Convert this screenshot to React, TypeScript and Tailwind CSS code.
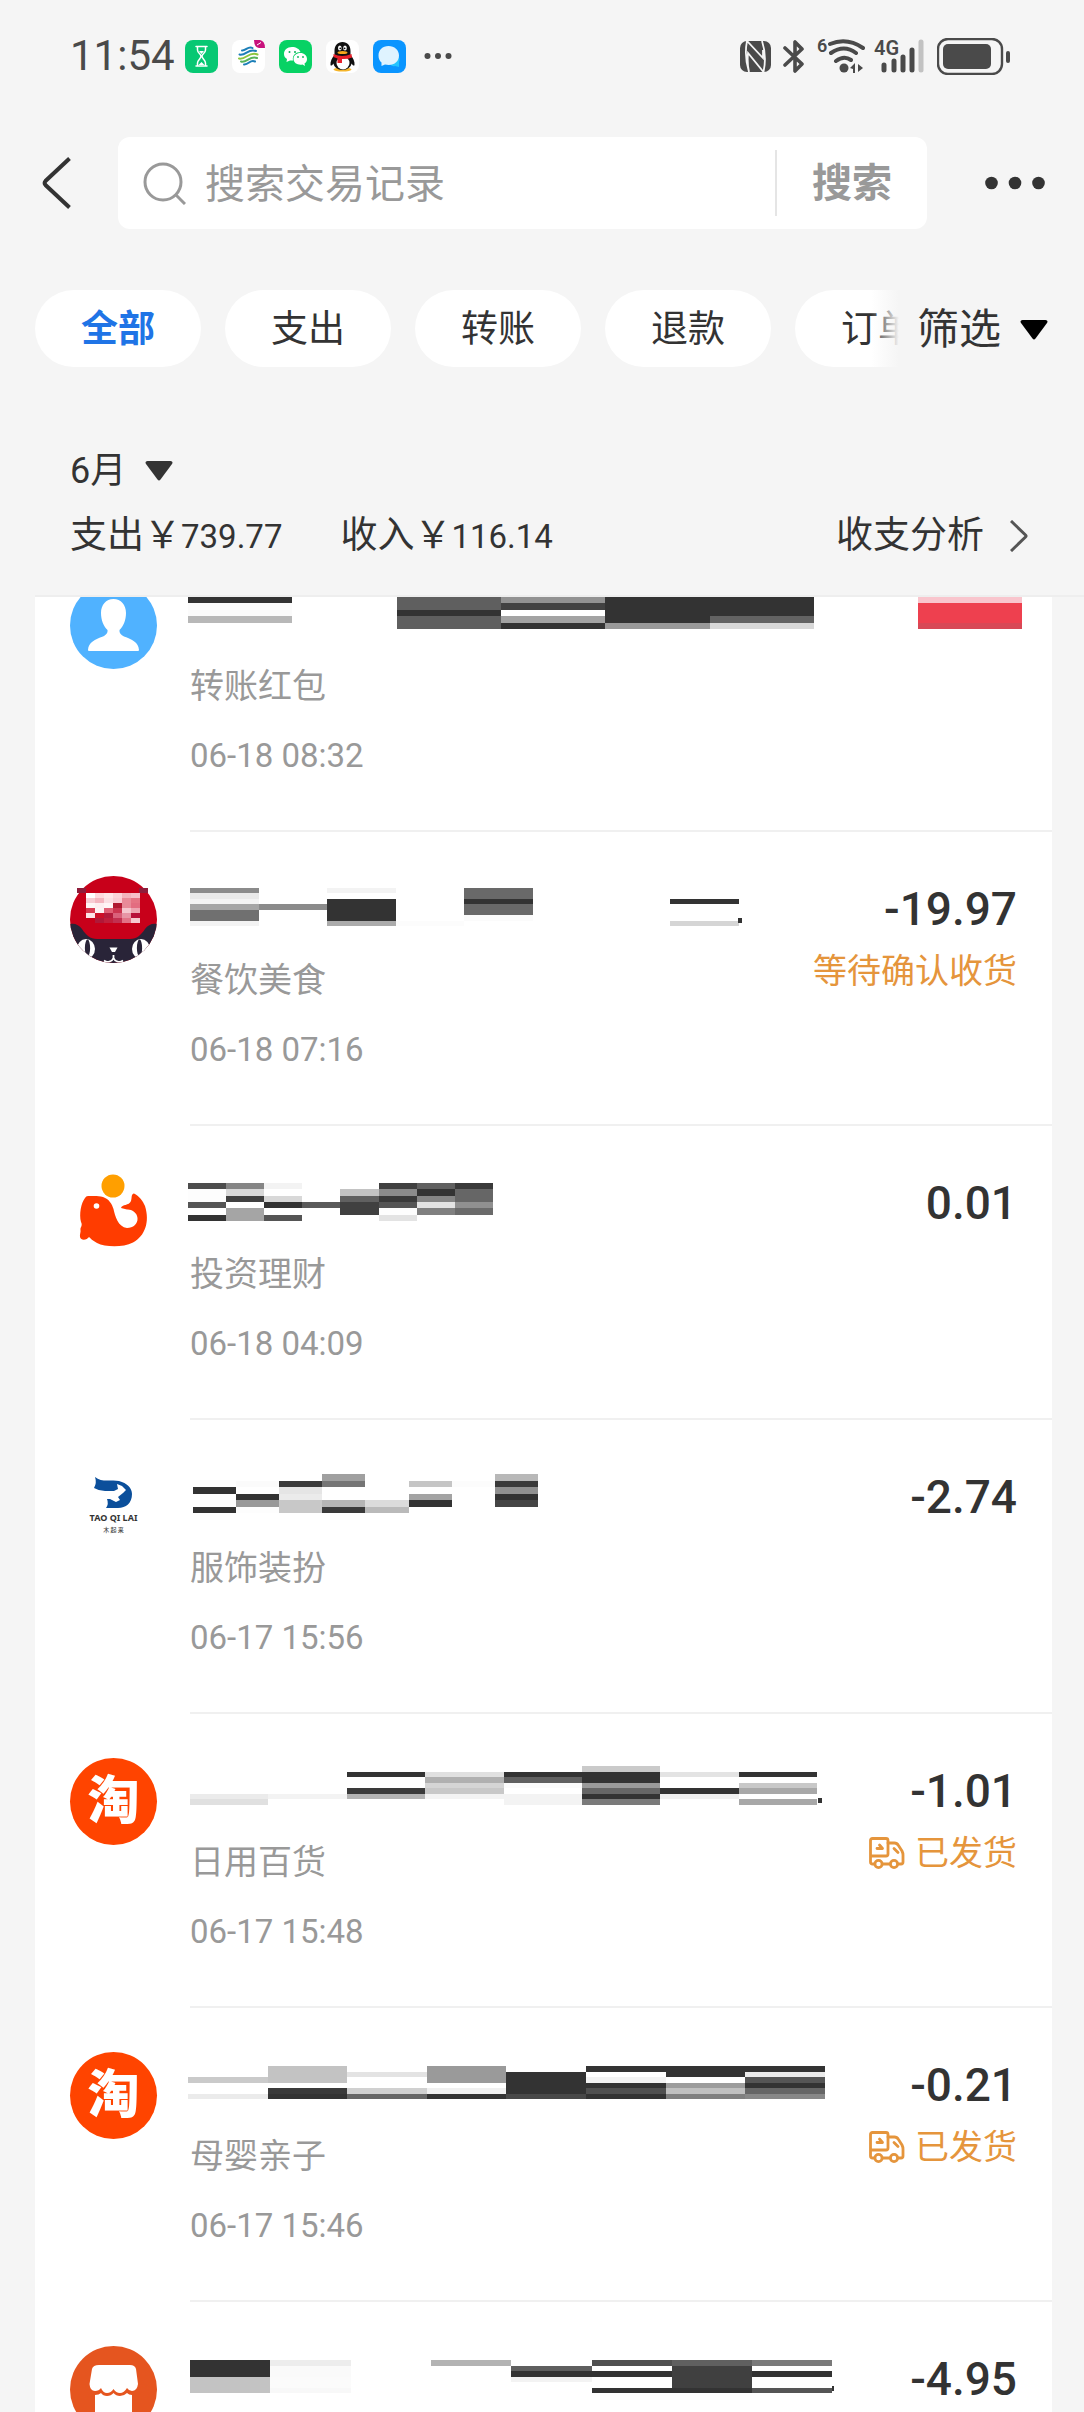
import React from "react";

type Rect = [number, number, number, number, string];

type Mosaic = {
  x: number;
  y: number;
  cw: number;
  ch: number;
  rows: string[];
  extra?: Rect[];
};

type Entry = {
  id: string;
  icon: React.ReactNode;
  mosaic: Mosaic;
  category?: string;
  time?: string;
  amount?: string;
  status?: string;
  shipped?: boolean;
};

/* Redacted title: a grid of grey cells, "--" leaves a cell empty. */
function Redacted({ x, y, cw, ch, rows, extra = [] }: Mosaic) {
  return (
    <svg
      viewBox="0 0 650 38"
      width="650"
      height="38"
      className="block overflow-visible"
      shapeRendering="crispEdges"
      role="img"
      aria-label="已隐藏的交易名称"
    >
      {rows.map((row, r) =>
        row.split(" ").map((cell, c) =>
          cell === "--" ? null : (
            <rect
              key={`${r}-${c}`}
              x={Math.round(x + c * cw)}
              y={Math.round(y + r * ch)}
              width={Math.round(x + (c + 1) * cw) - Math.round(x + c * cw)}
              height={Math.round(y + (r + 1) * ch) - Math.round(y + r * ch)}
              fill={cell.length === 2 ? `#${cell}${cell}${cell}` : `#${cell}`}
            />
          ),
        ),
      )}
      {extra.map(([ex, ey, w, h, fill], i) => (
        <rect key={i} x={ex} y={ey} width={w} height={h} fill={fill} />
      ))}
    </svg>
  );
}

function PersonIcon() {
  return (
    <svg viewBox="0 0 87 87" className="size-full">
      <circle cx="43.5" cy="43.5" r="43.5" fill="#50b2ff" />
      <path
        d="M43.500 17C51 17 56 23 56 31C56 38 53.500 44 49.500 48C49 51 51 53 54 54.500C62 57.500 68.500 60 69 68Q69 69 68 69H19Q18 69 18 68C18.500 60 25 57.500 33 54.500C36 53 38 51 37.500 48C33.500 44 31 38 31 31C31 23 36 17 43.500 17Z"
        fill="#fff"
      />
    </svg>
  );
}

const CAT_CELLS = [
  "ffffff ffd9de ffe6e9 fbd3d9 f3b3bd f6c0c9",
  "f8ccd3 f4b5bf fbe0e4 f9ccd4 e98a98 e57383",
  "fff5f5 fdeef0 fff5f6 b01830 e88a98 e36c80",
  "d83a50 fdf2f3 e06075 cc3550 f5c6ce eda3b0",
  "fce4e7 cc1028 b31c3c d9607a e795a5 b8103a",
  "c8001a b01838 c0203c c23050 e27286 f6c9d0",
];

function CatIcon() {
  return (
    <svg viewBox="0 0 87 87" className="size-full">
      <defs>
        <clipPath id="cat-clip">
          <circle cx="43.5" cy="43.5" r="43.5" />
        </clipPath>
      </defs>
      <g clipPath="url(#cat-clip)">
        <rect width="87" height="87" fill="#c8001a" />
        <path
          d="M0 48C5 47 9 49 12 53C16 59 20 63 27 63H60C67 63 71 59 75 53C78 49 82 47 87 48V87H0Z"
          fill="#292438"
        />
        <ellipse cx="16" cy="73" rx="9" ry="10" fill="#fff" />
        <ellipse cx="71" cy="73" rx="9" ry="10" fill="#fff" />
        <ellipse cx="17.500" cy="72" rx="2.600" ry="8.500" fill="#292438" />
        <ellipse cx="69.500" cy="72" rx="2.600" ry="8.500" fill="#292438" />
        <path d="M39.500 71.500H47.500L45 76H42Z" fill="#fff" />
        <path
          d="M43.500 79V82C42 86 37 87 34 84.500M43.500 82C45 86 50 87 53 84.500"
          stroke="#fff"
          strokeWidth="1.800"
          fill="none"
        />
      </g>
      <g shapeRendering="crispEdges">
        <rect x="7" y="12" width="9" height="5" fill="#8f1c3a" />
        <rect x="69" y="12" width="9" height="5" fill="#8f1c3a" />
        {CAT_CELLS.map((row, r) =>
          row
            .split(" ")
            .map((fill, c) => (
              <rect key={`${r}-${c}`} x={16 + c * 9} y={17 + r * 5} width="9" height="5" fill={`#${fill}`} />
            )),
        )}
      </g>
    </svg>
  );
}

function WhaleIcon() {
  return (
    <svg viewBox="0 0 87 87" className="size-full">
      <circle cx="43" cy="16" r="11.500" fill="#ff9f00" />
      <path
        d="M18 26C24 26 28 25.500 33 27C39 29 42 34 43.500 39C45 46 48 57 57 58C63 58 68 54 67.500 48C67 42 61 39 57 39.500L51 38C52 34 59 36 61 31C62 28 61 24 64 23.500C69 26 73 31 75 36C80 52 75 66 63 72.500C52 78 35 77 27 73C23 71 20 68 19 67C17 70 11 71 10 67C9.500 64 11 62 10.500 60C10 57 13 56 11 52C9 44 11 33 15 28Q16 26 18 26Z"
        fill="#ff3c00"
      />
      <circle cx="26.500" cy="36" r="2.800" fill="#fff" />
    </svg>
  );
}

function TaoQiLaiIcon() {
  return (
    <svg viewBox="0 0 87 87" className="size-full">
      <path
        d="M25 13C32 19 42 15 49 17C57 19 62 24 62 30C62 39 56 44 48 44H36Q39 40 37 35H40L46 38L50 36L48 33L53 29L56 26L52 22L47 20L48 25L44 27H35Q29 27 24 24Q27 19 25 13Z"
        fill="#0b4f9b"
      />
      <text
        x="43.500"
        y="57"
        textAnchor="middle"
        fontSize="9"
        fontWeight="700"
        fill="#333"
        className="font-['Noto_Sans',sans-serif]"
      >
        TAO QI LAI
      </text>
      <text
        x="43.500"
        y="68"
        textAnchor="middle"
        fontSize="6"
        fontWeight="500"
        fill="#444"
        className="font-['Noto_Sans_CJK_SC',sans-serif]"
      >
        木 起 来
      </text>
    </svg>
  );
}

function TaobaoIcon() {
  return (
    <span className="flex size-full items-center justify-center rounded-full bg-[#ff4400] text-[52px] leading-[56px] font-black text-white">
      淘
    </span>
  );
}

function StoreIcon() {
  return (
    <svg viewBox="0 0 87 87" className="size-full">
      <circle cx="43.5" cy="43.5" r="43.5" fill="#e5551f" />
      <path
        d="M29 19H60Q65 19 66 23L68 38Q67 45 62 45Q59 45 57 42Q54 47 50 47Q46 47 43.500 43Q41 47 37 47Q33 47 31 42Q29 45 25 45Q20 45 19.500 38L22 23Q23 19 29 19Z"
        fill="#fff"
      />
      <path
        d="M25 49Q29 49 31 47Q33 50 37 50Q41 50 43.500 47Q46 50 50 50Q54 50 57 47Q59 49 62 49V72H25Z"
        fill="#fff"
      />
    </svg>
  );
}

function TruckIcon() {
  return (
    <svg
      viewBox="0 0 36 32"
      className="h-8 w-9"
      fill="none"
      stroke="#e5953c"
      strokeWidth="2.800"
      strokeLinecap="round"
      strokeLinejoin="round"
      aria-hidden="true"
    >
      <path d="M5 27H3.500Q1.500 27 1.500 25V3.500Q1.500 1.500 3.500 1.500H17Q19 1.500 19 3.500V17Q19 19 17 19H2" />
      <path d="M19 6H25.500Q28 6 29.500 8.500L33 14Q34 16 34 18V25Q34 27 32 27H29.500" />
      <path d="M14 27H20.500M25 11.500L29 15.500M8 11.500H13.500L10.500 8" />
      <circle cx="9.500" cy="27" r="3.600" />
      <circle cx="25" cy="27" r="3.600" />
    </svg>
  );
}

function Triangle() {
  return (
    <svg viewBox="0 0 28 20" className="h-5 w-7" fill="currentColor" aria-hidden="true">
      <path d="M2.500 0H25.500Q28.500 .5 27 3L15.500 18.500Q14 20.500 12.500 18.500L1 3Q-.5 .5 2.500 0Z" />
    </svg>
  );
}

function StatusBar() {
  return (
    <div className="flex h-28 items-center justify-between pr-[74px] pl-[70px] text-[#4a4a4a]">
      <div className="flex items-center gap-3.5">
        <span className="-mr-1 text-[42px] leading-14">11:54</span>
        <svg viewBox="0 0 33 33" className="size-[33px]">
          <rect width="33" height="33" rx="8" fill="#07c873" />
          <g fill="none" stroke="#fff" strokeWidth="1.500" strokeLinecap="round">
            <path d="M11 6.500H22M11 26H22M12.500 7V10C12.500 13 16 14 16 16.300S12.500 20 12.500 23V26M20.500 7V10C20.500 13 17 14 17 16.300S20.500 20 20.500 23V26" />
          </g>
          <path d="M14 11H19L16.500 14ZM13.500 25L16.500 22L19.500 25Z" fill="#fff" />
        </svg>
        <svg viewBox="0 0 33 33" className="size-[33px] overflow-visible">
          <rect width="33" height="33" rx="8" fill="#fff" />
          <g fill="none" strokeWidth="2" strokeLinecap="round">
            <path d="M10 10.500C14 11 16 5.500 20.500 8M7.500 14.500C14 16 16 8 24 11" stroke="#1c7fb8" />
            <path d="M7 18.500C14 20 17 11 25.500 14.500" stroke="#8cc63f" />
            <path d="M9 21.500C15 23 18 15 25 18" stroke="#57b35a" />
            <path d="M12 24.500C17 25 18 19 23 21.500" stroke="#1c7fb8" />
          </g>
          <path d="M22 0H28Q33 1 33 8H27Q22 7 22 0Z" fill="#c8127c" />
          <path d="M25 5L29 2.500" stroke="#fff" strokeWidth="1" />
        </svg>
        <svg viewBox="0 0 33 33" className="size-[33px]">
          <rect width="33" height="33" rx="8" fill="#07d264" />
          <path
            d="M13 7C8 7 5 10 5 14C5 16 6 18 8 19L7.500 22L11 20.500H14C13 15 17 12 21.500 12C20.500 9 17 7 13 7Z"
            fill="#fff"
          />
          <path
            d="M21.500 13C17.500 13 14.500 15.500 14.500 19C14.500 23 19 25.500 23.500 24.500L26 26L25.500 23.500C27 22.500 28 21 28 19C28 15.500 25 13 21.500 13Z"
            fill="#fff"
          />
          <g fill="#07b255">
            <circle cx="10.500" cy="12" r="1" />
            <circle cx="16" cy="12" r="1" />
            <circle cx="19" cy="17" r=".9" />
            <circle cx="24" cy="17" r=".9" />
          </g>
        </svg>
        <svg viewBox="0 0 33 33" className="size-[33px]">
          <rect width="33" height="33" rx="8" fill="#fff" />
          <ellipse cx="16.500" cy="29.500" rx="9" ry="2" fill="#f5b52a" />
          <path
            d="M16.500 2C11.500 2 8.500 5.500 8.500 11V15C6 18 4 21.500 4.500 25C5 26.500 6.500 25 7.500 23.500C8 27 11.500 30 16.500 30S25 27 25.500 23.500C26.500 25 28 26.500 28.500 25C29 21.500 27 18 24.500 15V11C24.500 5.500 21.500 2 16.500 2Z"
            fill="#111"
          />
          <ellipse cx="17" cy="23" rx="6.500" ry="6.500" fill="#fff" />
          <path d="M7.500 14Q16 18 25.500 14L26 17.500Q21 19.500 16 19V23H11.500V18.500L7.500 17Z" fill="#e8202a" />
          <ellipse cx="13.800" cy="8" rx="1.800" ry="2.500" fill="#fff" />
          <ellipse cx="19" cy="8" rx="1.800" ry="2.500" fill="#fff" />
          <circle cx="14.300" cy="8.300" r=".9" fill="#111" />
          <circle cx="18.600" cy="8.300" r=".9" fill="#111" />
          <ellipse cx="16.500" cy="12.500" rx="5" ry="1.600" fill="#f7a81b" />
        </svg>
        <svg viewBox="0 0 33 33" className="size-[33px]">
          <rect width="33" height="33" rx="8" fill="#0a95ff" />
          <path d="M22 17H26Q27 20 26 22V27L22 26Q19 27 17 24Z" fill="#22c4ff" />
          <path
            d="M15.500 6C9.500 6 5.500 10 5.500 15.500C5.500 18.500 6.500 21 8.500 22.500V26L12 24.500C20 26.500 26 22 26 15.500C26 10 21.500 6 15.500 6Z"
            fill="#dff3ff"
          />
        </svg>
        <svg viewBox="0 0 28 8" className="ml-1 h-2 w-7" fill="currentColor">
          <circle cx="3.500" cy="4" r="3" />
          <circle cx="14" cy="4" r="3" />
          <circle cx="24.500" cy="4" r="3" />
        </svg>
      </div>

      <div className="flex items-center gap-3">
        <svg viewBox="0 0 31 31" className="size-[31px]">
          <rect width="31" height="31" rx="7" fill="currentColor" />
          <path
            d="M7 0Q4 15 9 31M22 0Q27 15 23.500 31M7 0L23 17V9M9 31Q7 22 8 12L23.500 31"
            stroke="#f5f5f5"
            strokeWidth="1.800"
            fill="none"
          />
        </svg>
        <svg
          viewBox="0 0 22 35"
          className="h-[35px] w-[22px]"
          fill="none"
          stroke="currentColor"
          strokeWidth="3.600"
          strokeLinecap="round"
          strokeLinejoin="round"
        >
          <path d="M2 9L19 25L12 32V21M2 26L19 10L12 3V15" />
        </svg>
        <div className="relative">
          <span className="absolute -top-1 left-0 text-[18px] leading-6 font-semibold">6</span>
          <svg viewBox="0 0 49 37" className="h-[37px] w-[49px]">
            <g fill="none" stroke="currentColor" strokeWidth="4" strokeLinecap="round">
              <path d="M13 6Q30 -1 46 10M14 15Q27 6 39 15M19 23Q27 17 34 22" />
            </g>
            <circle cx="27" cy="30" r="4.500" fill="currentColor" />
            <path d="M33 30L38 25V35H36V31ZM41 26L46 30L41 34Z" fill="currentColor" />
          </svg>
        </div>
        <div className="relative -ml-1">
          <span className="absolute -top-1 left-0 text-[20px] leading-7 font-semibold">4G</span>
          <svg viewBox="0 0 51 37" className="h-[37px] w-[51px]">
            <g strokeWidth="5" strokeLinecap="round" stroke="currentColor">
              <path d="M10 27V32M20 23V32M29 19V32M38 12V32" />
              <path d="M47 4V32" stroke="#c2c2c2" />
            </g>
          </svg>
        </div>
        <svg viewBox="0 0 73 37" className="h-[37px] w-[73px]">
          <rect x="1" y="1" width="64" height="35" rx="10" fill="none" stroke="currentColor" strokeWidth="2.400" />
          <rect x="6" y="6" width="48" height="25" rx="5" fill="currentColor" />
          <rect x="69" y="13" width="4" height="12" rx="2" fill="currentColor" />
        </svg>
      </div>
    </div>
  );
}

function SearchHeader() {
  return (
    <header className="flex h-[142px] items-center pr-[39px] pl-[42px]">
      <button type="button" aria-label="返回" className="mr-[47px]">
        <svg viewBox="0 0 29 52" className="h-[52px] w-[29px]" fill="none" stroke="#333" strokeWidth="4">
          <path d="M27.500 1.500L3.500 24Q1.800 26 3.500 28L27.500 50.500" />
        </svg>
      </button>
      <form
        className="flex h-[92px] min-w-0 flex-1 items-center rounded-xl bg-white pl-[25px]"
        onSubmit={(e) => e.preventDefault()}
      >
        <label htmlFor="search" className="mr-[19px] shrink-0" aria-label="搜索交易记录">
          <svg viewBox="0 0 43 43" className="size-[43px]" fill="none" stroke="#999" strokeWidth="3">
            <circle cx="20" cy="20" r="18" />
            <path d="M33 33L42 42" />
          </svg>
        </label>
        <input
          id="search"
          type="text"
          placeholder="搜索交易记录"
          className="h-[60px] min-w-0 flex-1 bg-transparent pt-0.5 text-[40px] leading-14 text-[#333] outline-none placeholder:text-[#999]"
        />
        <button
          type="submit"
          className="h-[66px] w-[152px] border-l-2 border-[#e5e5e5] pt-0.5 text-[40px] leading-14 font-bold text-[#999]"
        >
          搜索
        </button>
      </form>
      <button type="button" aria-label="更多" className="ml-[58px]">
        <svg viewBox="0 0 60 14" className="h-3.5 w-[60px]" fill="#333">
          <circle cx="6.500" cy="7" r="6.300" />
          <circle cx="30" cy="7" r="6.300" />
          <circle cx="53.500" cy="7" r="6.300" />
        </svg>
      </button>
    </header>
  );
}

function FilterBar() {
  const tabs = ["全部", "支出", "转账", "退款", "订单"];
  return (
    <nav className="flex items-center pt-9 pr-9 pl-[35px]" aria-label="交易类型">
      <div className="relative min-w-0 flex-1 overflow-hidden">
        <div className="flex gap-6">
          {tabs.map((tab, i) => (
            <button
              key={tab}
              type="button"
              aria-pressed={i === 0}
              className={
                i === 0
                  ? "h-[77px] shrink-0 rounded-full bg-white px-[46px] pt-0.5 text-[37px] leading-12 font-bold text-[#1f74e6]"
                  : "h-[77px] shrink-0 rounded-full bg-white px-[46px] pt-0.5 text-[37px] leading-12 text-[#333]"
              }
            >
              {tab}
            </button>
          ))}
        </div>
        <div className="absolute inset-y-0 right-0 w-7 bg-linear-to-r from-[#f5f5f5]/0 to-[#f5f5f5]" />
      </div>
      <button type="button" className="flex items-center gap-[19px] pt-0.5 pl-[18px] text-[42px] leading-14 text-[#333]">
        筛选
        <span className="text-black">
          <Triangle />
        </span>
      </button>
    </nav>
  );
}

function Summary() {
  return (
    <section className="ml-[35px] border-b-2 border-[#eeeeee] pr-14 pb-[35px] pl-[35px] text-[#333]">
      <button type="button" className="mt-20 flex h-12 items-center gap-[19px] text-[36px] leading-12">
        6月
        <Triangle />
      </button>
      <div className="mt-[17px] flex h-12 items-center text-[37px] leading-12">
        <span>
          支出￥<span className="text-[33px]">739.77</span>
        </span>
        <span className="ml-[58px]">
          收入￥<span className="text-[33px]">116.14</span>
        </span>
        <a href="#analysis" className="ml-auto flex items-center gap-[26px]">
          收支分析
          <svg viewBox="0 0 18 32" className="h-8 w-[18px]" fill="none" stroke="#555" strokeWidth="3">
            <path d="M1 1L15.500 15Q16.500 16 15.500 17L1 31" />
          </svg>
        </a>
      </div>
    </section>
  );
}

const ENTRIES: Entry[] = [
  {
    id: "e1",
    icon: <PersonIcon />,
    mosaic: {
      x: -2,
      y: 2,
      cw: 104.3,
      ch: 6.4,
      rows: [
        "33 -- 5f 92 33 33 -- f9c5cd",
        "fb -- 5f 42 33 33 -- ee404f",
        "fb -- 33 ff 33 33 -- ee404f",
        "b8 -- 5f a3 33 63 -- ee404f",
        "-- -- 5f 33 99 d8 -- d84856",
      ],
    },
    category: "转账红包",
    time: "06-18 08:32",
  },
  {
    id: "e2",
    icon: <CatIcon />,
    mosaic: {
      x: 0,
      y: -1,
      cw: 68.6,
      ch: 5.43,
      rows: [
        "8b -- f3 -- 69 -- -- --",
        "e9 -- -- -- 69 -- -- --",
        "f3 -- 33 -- 33 -- -- 33",
        "a5 8b 33 -- 69 -- -- --",
        "70 -- 33 -- 69 -- -- --",
        "70 -- 33 -- fb -- -- --",
        "f3 -- ab fc -- -- -- d5",
      ],
      extra: [[548, 29, 4, 5, "#333"]],
    },
    category: "餐饮美食",
    time: "06-18 07:16",
    amount: "-19.97",
    status: "等待确认收货",
  },
  {
    id: "e3",
    icon: <WhaleIcon />,
    mosaic: {
      x: -2,
      y: 0,
      cw: 38.1,
      ch: 6.33,
      rows: [
        "4d 85 f3 -- -- 40 60 3a",
        "fd d8 -- -- c3 8b 33 66",
        "fd 40 d8 -- 60 3a 85 66",
        "55 -- 33 5a 40 55 e3 90",
        "-- a5 -- -- 40 fd 80 6a",
        "33 a5 55 -- -- e3 -- --",
      ],
    },
    category: "投资理财",
    time: "06-18 04:09",
    amount: "0.01",
  },
  {
    id: "e4",
    icon: <TaoQiLaiIcon />,
    mosaic: {
      x: 3,
      y: -3,
      cw: 43.1,
      ch: 6.5,
      rows: [
        "-- -- -- a0 -- -- -- b8",
        "-- fb 3a 75 -- c5 fc 3a",
        "33 -- e5 -- -- -- -- 90",
        "-- 33 eb -- -- a3 -- 33",
        "-- 99 c8 b5 db 33 -- 45",
        "33 fd c8 3a ba -- -- --",
      ],
    },
    category: "服饰装扮",
    time: "06-17 15:56",
    amount: "-2.74",
  },
  {
    id: "e5",
    icon: <TaobaoIcon />,
    mosaic: {
      x: 0,
      y: -5,
      cw: 78.4,
      ch: 5.57,
      rows: [
        "-- -- -- -- -- ca -- --",
        "-- -- 33 e0 33 33 e3 33",
        "-- -- -- b0 60 33 -- --",
        "-- -- -- d5 fb 9a -- c8",
        "-- -- 3a c8 -- 66 33 a8",
        "eb f3 b3 f3 f3 33 f0 --",
        "e0 -- -- -- f3 7a -- a8",
      ],
      extra: [[628, 27, 4, 5, "#333"]],
    },
    category: "日用百货",
    time: "06-17 15:48",
    amount: "-1.01",
    status: "已发货",
    shipped: true,
  },
  {
    id: "e6",
    icon: <TaobaoIcon />,
    mosaic: {
      x: -2,
      y: 1,
      cw: 79.6,
      ch: 5.5,
      rows: [
        "-- c3 -- 9a -- 33 33 33",
        "-- c3 e3 9a 33 -- 33 eb",
        "ca c3 -- 9a 33 f3 -- 55",
        "-- -- -- -- 33 33 9c 33",
        "-- 3a d0 f0 33 50 c0 66",
        "eb 33 66 33 48 33 80 88",
      ],
    },
    category: "母婴亲子",
    time: "06-17 15:46",
    amount: "-0.21",
    status: "已发货",
    shipped: true,
  },
  {
    id: "e7",
    icon: <StoreIcon />,
    mosaic: {
      x: 0,
      y: 1,
      cw: 80.3,
      ch: 5.5,
      rows: [
        "33 ed -- b3 -- 50 60 7a",
        "33 fa -- -- 5f -- 40 --",
        "33 fa -- -- 33 33 40 33",
        "c3 fb -- -- f3 -- 40 --",
        "c3 fb -- -- -- -- 40 --",
        "c3 f8 -- -- -- 33 33 55",
      ],
      extra: [[642, 27, 2, 5, "#333"]],
    },
    amount: "-4.95",
  },
];

function EntryRow({ entry }: { entry: Entry }) {
  return (
    <li className="flex h-[294px] shrink-0 pl-[35px]">
      <div className="mt-11 mr-[33px] size-[87px] shrink-0">{entry.icon}</div>
      <div className="flex min-w-0 flex-1 justify-between border-b-2 border-[#f0f0f0] pr-[35px]">
        <div className="w-0 pt-[57px] whitespace-nowrap text-[#999]">
          <Redacted {...entry.mosaic} />
          {entry.category && <p className="mt-[31px] text-[34px] leading-[44px]">{entry.category}</p>}
          {entry.time && <p className="mt-[26px] text-[33px] leading-[44px]">{entry.time}</p>}
        </div>
        <div className="flex flex-col items-end pt-[49px]">
          <p className="text-[46px] leading-14 font-medium text-[#333]">{entry.amount}</p>
          {entry.status && (
            <p className="mt-3 flex items-center gap-2.5 text-[34px] leading-[44px] text-[#e5953c]">
              {entry.shipped && <TruckIcon />}
              {entry.status}
            </p>
          )}
        </div>
      </div>
    </li>
  );
}

export default function App() {
  return (
    <div className="flex h-screen flex-col overflow-hidden bg-[#f5f5f5] font-[Roboto,'Noto_Sans_CJK_SC',sans-serif]">
      <StatusBar />
      <SearchHeader />
      <FilterBar />
      <Summary />
      <main className="mr-8 ml-[35px] min-h-0 flex-1 overflow-hidden bg-white">
        <ul className="-mt-[59px] flex flex-col">
          {ENTRIES.map((entry) => (
            <EntryRow key={entry.id} entry={entry} />
          ))}
        </ul>
      </main>
    </div>
  );
}
